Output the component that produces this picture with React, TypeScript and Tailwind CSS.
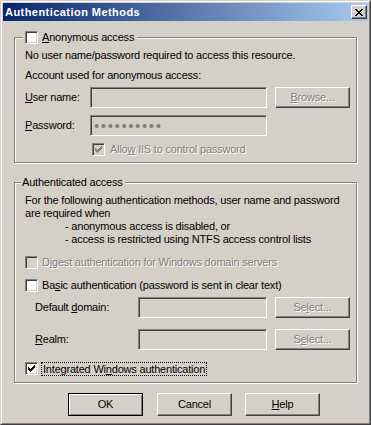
import React from "react";

const raised =
  "border border-t-white border-l-white border-r-[#404040] border-b-[#404040] shadow-[inset_-1px_-1px_0_#808080] bg-[#d4d0c8]";
const sunken =
  "border border-t-[#808080] border-l-[#808080] border-r-white border-b-white shadow-[inset_1px_1px_0_#404040,inset_-1px_-1px_0_#d4d0c8]";
const dis = "text-[#808080] [text-shadow:1px_1px_0_#fff]";

function U({ children }: { children: React.ReactNode }) {
  return <span className="underline decoration-1 underline-offset-[1px]">{children}</span>;
}

function Check() {
  return (
    <svg width="7" height="7" viewBox="0 0 7 7" shapeRendering="crispEdges" className="block">
      <path
        d="M6 0h1v1h-1z M5 1h2v1h-2z M0 2h1v1h-1z M4 2h3v1h-3z M0 3h2v1h-2z M3 3h3v1h-3z M0 4h5v1h-5z M1 5h3v1h-3z M2 6h1v1h-1z"
        fill="currentColor"
      />
    </svg>
  );
}

function Checkbox({ checked, disabled }: { checked?: boolean; disabled?: boolean }) {
  return (
    <div
      className={`w-[13px] h-[13px] shrink-0 flex items-center justify-center ${sunken} ${
        disabled ? "bg-[#d4d0c8] text-[#808080]" : "bg-white text-black"
      }`}
    >
      {checked && <Check />}
    </div>
  );
}

function Input({ w, password }: { w: string; password?: boolean }) {
  return (
    <div className={`${w} h-[21px] shrink-0 bg-[#d4d0c8] ${sunken} flex items-center pl-[3px]`}>
      {password && (
        <span className="text-[#808080] text-[15px] leading-[14px] tracking-[1.6px]">••••••••••</span>
      )}
    </div>
  );
}

function Button({
  children,
  disabled,
  def,
  className = "",
  h = "h-[21px]",
}: {
  children: React.ReactNode;
  disabled?: boolean;
  def?: boolean;
  className?: string;
  h?: string;
}) {
  return (
    <div
      className={`w-[75px] ${h} shrink-0 flex items-center justify-center ${
        def
          ? "border border-black shadow-[inset_1px_1px_0_#fff,inset_-1px_-1px_0_#808080] bg-[#d4d0c8]"
          : raised
      } ${disabled ? dis : "text-black"} ${className}`}
    >
      <span className="leading-[13px]">{children}</span>
    </div>
  );
}

function Group({
  legend,
  children,
  className = "",
}: {
  legend: React.ReactNode;
  children: React.ReactNode;
  className?: string;
}) {
  return (
    <div className={`relative w-[344px] ${className}`}>
      <div className="absolute left-0 right-[1px] top-[6px] bottom-[1px] border border-[#808080] shadow-[1px_1px_0_#fff,inset_1px_1px_0_#fff]" />
      <div className="relative flex">{legend}</div>
      <div className="relative">{children}</div>
    </div>
  );
}

function CloseGlyph() {
  return (
    <svg width="8" height="7" viewBox="0 0 8 7" shapeRendering="crispEdges" className="block">
      <path
        d="M0 0h2v1h-2z M6 0h2v1h-2z M1 1h2v1h-2z M5 1h2v1h-2z M2 2h4v1h-4z M3 3h2v1h-2z M2 4h4v1h-4z M1 5h2v1h-2z M5 5h2v1h-2z M0 6h2v1h-2z M6 6h2v1h-2z"
        fill="#000"
      />
    </svg>
  );
}

export default function App() {
  return (
    <div className="w-[371px] h-[425px] border border-t-[#d4d0c8] border-l-[#d4d0c8] border-r-[#404040] border-b-[#404040] bg-[#d4d0c8] text-[11px] text-black font-['Liberation_Sans',Arial,sans-serif] select-none">
      <div className="h-full border border-t-white border-l-white border-r-[#808080] border-b-[#808080] p-px flex flex-col">
        {/* Title bar */}
        <div className="h-[18px] shrink-0 flex items-center justify-between pl-[2px] pr-[1px] bg-[linear-gradient(to_right,#0a246a,#a6caf0)]">
          <span className="text-white font-bold text-[11px] leading-[13px] tracking-[0.45px]">
            Authentication Methods
          </span>
          <div className={`w-[16px] h-[14px] flex items-center justify-center ${raised}`}>
            <CloseGlyph />
          </div>
        </div>

        {/* Body */}
        <div className="flex-1 flex flex-col pl-[11px] pt-[10px] tracking-[-0.2px]">
          <Group
            legend={
              <div className="flex items-center h-[13px] ml-[9px] px-[2px] bg-[#d4d0c8]">
                <Checkbox />
                <span className="ml-[4px] leading-[13px] pr-[1px]">
                  <U>A</U>nonymous access
                </span>
              </div>
            }
          >
            <div className="pl-[11px] pb-[8px] flex flex-col">
              <div className="mt-[5px] h-[13px] leading-[13px]">
                No user name/password required to access this resource.
              </div>
              <div className="mt-[7px] h-[13px] leading-[13px]">Account used for anonymous access:</div>
              <div className="mt-[5px] h-[21px] flex items-center">
                <div className="w-[65px] leading-[13px]">
                  <U>U</U>ser name:
                </div>
                <Input w="w-[177px]" />
                <Button disabled className="ml-[8px]">
                  <U>B</U>rowse...
                </Button>
              </div>
              <div className="mt-[7px] h-[21px] flex items-center">
                <div className="w-[65px] leading-[13px]">
                  <U>P</U>assword:
                </div>
                <Input w="w-[177px]" password />
              </div>
              <div className="mt-[7px] h-[13px] flex items-center pl-[67px]">
                <Checkbox checked disabled />
                <span className={`ml-[5px] leading-[13px] ${dis}`}>
                  Allo<U>w</U> IIS to control password
                </span>
              </div>
            </div>
          </Group>

          <Group
            className="mt-[12px]"
            legend={
              <div className="flex items-center h-[13px] ml-[7px] px-[1px] bg-[#d4d0c8]">
                <span className="leading-[13px] pr-[1px]">Authenticated access</span>
              </div>
            }
          >
            <div className="pl-[11px] pb-[9px] flex flex-col">
              <div className="mt-[5px] flex flex-col leading-[13px]">
                <div className="h-[13px]">For the following authentication methods, user name and password</div>
                <div className="h-[13px]">are required when</div>
                <div className="h-[13px] pl-[40px]">- anonymous access is disabled, or</div>
                <div className="h-[13px] pl-[40px]">- access is restricted using NTFS access control lists</div>
              </div>
              <div className="mt-[10px] h-[13px] flex items-center">
                <Checkbox disabled />
                <span className={`ml-[4px] leading-[13px] ${dis}`}>
                  D<U>i</U>gest authentication for Windows domain servers
                </span>
              </div>
              <div className="mt-[10px] h-[13px] flex items-center">
                <Checkbox />
                <span className="ml-[4px] leading-[13px]">
                  Ba<U>s</U>ic authentication (password is sent in clear text)
                </span>
              </div>
              <div className="mt-[5px] h-[21px] flex items-center pl-[10px]">
                <div className="w-[103px] leading-[13px]">
                  Default <U>d</U>omain:
                </div>
                <Input w="w-[129px]" />
                <Button disabled className="ml-[8px]">
                  Se<U>l</U>ect...
                </Button>
              </div>
              <div className="mt-[11px] h-[21px] flex items-center pl-[10px]">
                <div className="w-[103px] leading-[13px]">
                  <U>R</U>ealm:
                </div>
                <Input w="w-[129px]" />
                <Button disabled className="ml-[8px]">
                  S<U>e</U>lect...
                </Button>
              </div>
              <div className="mt-[12px] h-[13px] flex items-center">
                <Checkbox checked />
                <span className="ml-[3px] h-[14px] leading-[12px] px-px border border-dotted border-black">
                  Integrated Wi<U>n</U>dows authentication
                </span>
              </div>
            </div>
          </Group>

          <div className="mt-[9px] flex">
            <Button def h="h-[23px]" className="ml-[54px]">
              OK
            </Button>
            <Button h="h-[23px]" className="ml-[14px]">
              Cancel
            </Button>
            <Button h="h-[23px]" className="ml-[13px]">
              <U>H</U>elp
            </Button>
          </div>
        </div>
      </div>
    </div>
  );
}
